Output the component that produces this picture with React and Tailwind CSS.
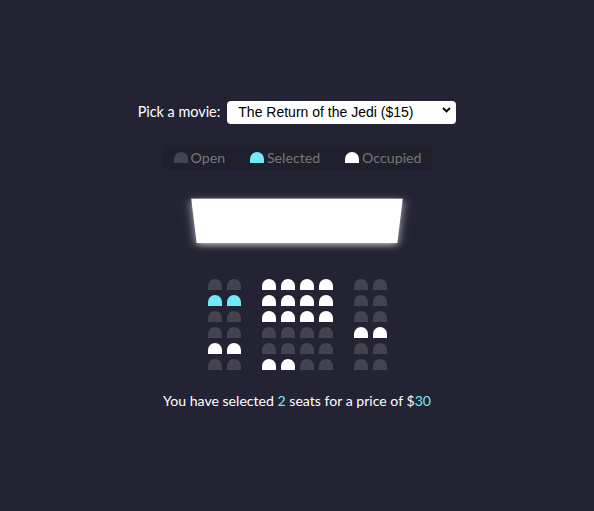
import { useState } from "react";

const movies = [
  { label: "Avengers: Endgame ($10)", price: 10 },
  { label: "Joker ($12)", price: 12 },
  { label: "Toy Story 4 ($8)", price: 8 },
  { label: "The Return of the Jedi ($15)", price: 15 },
];

// o = open, s = selected, x = occupied
const rows = [
  "ooxxxxoo",
  "ssxxxxoo",
  "ooxxxxoo",
  "ooooooxx",
  "xxoooooo",
  "ooxxoooo",
];

const seatColor = {
  o: "bg-[#444451]",
  s: "bg-[#6feaf6]",
  x: "bg-white",
};

const Seat = ({ state, extra = "" }) => (
  <div className={`w-[14px] h-[11px] rounded-t-[9px] ${seatColor[state]} ${extra}`} />
);

const App = () => {
  const [movie, setMovie] = useState(3);
  const count = rows.join("").split("").filter((c) => c === "s").length;

  return (
    <div className="min-h-[511px] w-full bg-[#242333] text-white flex flex-col items-center pt-[100px] font-['Lato',sans-serif]">
      <div className="flex items-center h-[23px]">
        <label className="text-[14.4px] mr-[7px]">Pick a movie:</label>
        <div className="relative">
          <select
            value={movie}
            onChange={(e) => setMovie(Number(e.target.value))}
            className="appearance-none bg-white text-black rounded-[4px] w-[229px] h-[23px] pl-[11px] text-[14px] font-['Liberation_Sans',Arial,sans-serif] outline-none"
          >
            {movies.map((m, i) => (
              <option key={i} value={i}>
                {m.label}
              </option>
            ))}
          </select>
          <svg
            className="absolute right-[5px] top-[8px] pointer-events-none"
            width="9"
            height="6"
            viewBox="0 0 9 6"
          >
            <path d="M1 1l3.5 3.5L8 1" fill="none" stroke="#000" strokeWidth="1.8" />
          </svg>
        </div>
      </div>

      <ul className="mt-[22px] w-[269px] h-[25px] flex items-center justify-between pl-[11px] pr-[10px] bg-[#201f2e] rounded-[4px] text-[#777]">
        <li className="flex items-center">
          <Seat state="o" extra="w-[13px]" />
          <small className="ml-[3px] text-[14.2px]">Open</small>
        </li>
        <li className="flex items-center">
          <Seat state="s" extra="w-[13px]" />
          <small className="ml-[3px] text-[14.2px]">Selected</small>
        </li>
        <li className="flex items-center">
          <Seat state="x" extra="w-[13px]" />
          <small className="ml-[3px] text-[14.2px]">Occupied</small>
        </li>
      </ul>

      <div className="mt-[20px] w-[206px] h-[63px] bg-white shadow-[0_3px_9px_rgba(255,255,255,0.7)] [transform:perspective(840px)_rotateX(-45deg)]" />

      <div className="mt-[26px] flex flex-col gap-[5px]">
        {rows.map((row, r) => (
          <div key={r} className="flex gap-[5px]">
            {row.split("").map((s, i) => (
              <Seat key={i} state={s} extra={i === 2 || i === 6 ? "ml-[16px]" : ""} />
            ))}
          </div>
        ))}
      </div>

      <p className="mt-[22px] text-[14.1px] leading-[17px]">
        You have selected <span className="text-[#6feaf6]">{count}</span> seats for a price of $<span className="text-[#6feaf6]">{count * movies[movie].price}</span>
      </p>
    </div>
  );
};

export default App;
